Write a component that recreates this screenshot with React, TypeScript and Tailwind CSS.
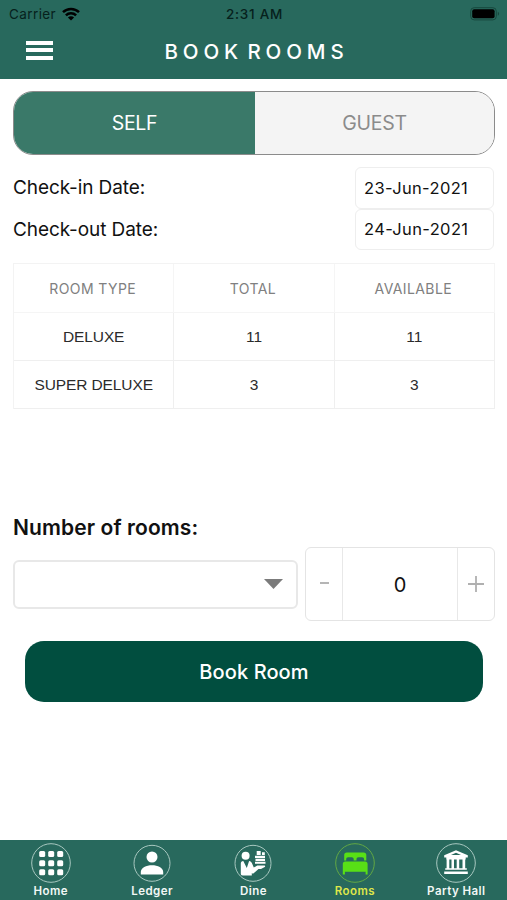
import React from 'react'

const rooms = [
  { type: 'DELUXE', total: 11, available: 11 },
  { type: 'SUPER DELUXE', total: 3, available: 3 },
]

function StatusBar() {
  return (
    <div className="h-7 flex items-center justify-between pl-[9px] pr-[7px] text-[13.5px] text-[#06211c]">
      <div className="flex-1 flex items-center gap-[6px]">
        <span className="w-[47px] tracking-[0.4px]">Carrier</span>
        <svg width="18" height="14" viewBox="0 0 18 14" fill="none" stroke="#000" strokeWidth="2.5">
          <path d="M1 5.2a11.4 11.4 0 0 1 16 0" />
          <path d="M3.9 8.3a7.2 7.2 0 0 1 10.2 0" />
          <path d="M9 13.6L5.9 10.5a4.4 4.4 0 0 1 6.2 0z" fill="#000" stroke="none" />
        </svg>
      </div>
      <span className="font-medium tracking-[0.7px]">2:31 AM</span>
      <div className="flex-1 flex justify-end">
        <svg width="30" height="14" viewBox="0 0 30 14">
          <rect x="0.7" y="0.7" width="25.6" height="12.2" rx="3.5" fill="none" stroke="#17483e" />
          <rect x="2.2" y="2.3" width="22.4" height="9" rx="2" fill="#000" />
          <path d="M27.8 4.8v4a2.2 2.2 0 0 0 0-4z" fill="#17483e" />
        </svg>
      </div>
    </div>
  )
}

function Header() {
  return (
    <header className="h-[79px] bg-[#28695d]">
      <StatusBar />
      <div className="h-[48px] grid grid-cols-[1fr_auto_1fr] items-center">
        <div className="pl-[26px] flex flex-col gap-[3.5px] pb-[4px]">
          <span className="w-[27px] h-1 bg-white"></span>
          <span className="w-[27px] h-1 bg-white"></span>
          <span className="w-[27px] h-1 bg-white"></span>
        </div>
        <h1 className="text-[20.5px] font-medium text-white tracking-[4.9px] [word-spacing:-6px] pl-[6px] whitespace-nowrap">BOOK ROOMS</h1>
      </div>
    </header>
  )
}

function DateRow({ label, value }: { label: string; value: string }) {
  return (
    <div className="h-[41.5px] flex items-center justify-between">
      <span className="text-[19px] pt-px text-[#111] tracking-[-0.1px]">{label}</span>
      <div className="w-[139px] h-full flex items-center pl-2 pt-px border border-[#eeeeee] rounded-md text-[16.5px] tracking-[0.35px] text-[#111]">{value}</div>
    </div>
  )
}

function RoomTable() {
  return (
    <div className="mt-[13px] border-t border-l border-[#f3f3f3]">
      <div className="grid grid-cols-3 h-[49px] text-[14px] tracking-[0.4px] text-[#808080]">
        <div className="flex items-center justify-center pr-[2px] border-r border-b border-[#f5f5f5]">ROOM TYPE</div>
        <div className="flex items-center justify-center pr-[2px] border-r border-b border-[#f5f5f5]">TOTAL</div>
        <div className="flex items-center justify-center pr-[2px] border-r border-b border-[#f5f5f5]">AVAILABLE</div>
      </div>
      {rooms.map((room) => (
        <div key={room.type} className="grid grid-cols-3 h-12 text-[15.5px] text-[#2b2b2b] font-['Liberation_Sans',sans-serif]">
          <div className="flex items-center justify-center pt-px border-r border-b border-[#efefef] tracking-[-0.1px]">{room.type}</div>
          <div className="flex items-center justify-center pt-px border-r border-b border-[#efefef]">{room.total}</div>
          <div className="flex items-center justify-center pt-px border-r border-b border-[#efefef]">{room.available}</div>
        </div>
      ))}
    </div>
  )
}

function HomeIcon() {
  return (
    <svg width="40" height="40" viewBox="0 0 40 40" fill="#fff">
      <circle cx="20" cy="20" r="19.3" fill="none" stroke="#a8c8c0" />
      {[8, 17.2, 26.2].map((y) =>
        [8.2, 17.2, 26.2].map((x) => <rect key={`${x}-${y}`} x={x} y={y} width="6" height="6" rx="1.5" />)
      )}
    </svg>
  )
}

function LedgerIcon() {
  return (
    <svg width="40" height="40" viewBox="0 0 40 40" fill="#fff">
      <circle cx="20" cy="20.3" r="18" fill="none" stroke="#a8c8c0" />
      <circle cx="20" cy="14" r="5.5" />
      <path d="M8.8 31.500v-2.500c0-4.300 5.500-6.800 11.200-6.800s11.200 2.500 11.200 6.800v2.500z" />
    </svg>
  )
}

function DineIcon() {
  return (
    <svg width="40" height="40" viewBox="0 0 40 40" fill="#fff">
      <circle cx="20" cy="20.3" r="18" fill="none" stroke="#a8c8c0" />
      <circle cx="12.6" cy="12.8" r="4" />
      <path d="M7.8 20.500c0-1.500.8-2.500 2.500-2.500l3.500 7 2.300-7c1.600.2 2.600 1.200 3.200 3l1.500 3.500 3.500-2h7.500l.4 1.200-4.200 2.200h-2.500l-4.500 4c-1 .7-1.700.7-2.200 0v2.600H9.800c-1.500 0-2-.7-2-2z" />
      <path d="M22 12.700h10v2.200H22zM22.500 15.700h9.500v2.200h-9.500zM22 18.700h10.500v2H22zM23.700 8h4v4.100h-4zM29 9.300h2.800v2.800H29z" />
    </svg>
  )
}

function RoomsIcon() {
  return (
    <svg width="40" height="40" viewBox="0 0 40 40" fill="#58df16">
      <circle cx="20" cy="20" r="19.3" fill="none" stroke="#62a844" />
      <path d="M9.200 17.500V12c0-1.600 1-2.600 2.600-2.600h16.900c1.600 0 2.600 1 2.600 2.600v5.500h-2.200v-1.300c0-1.300-.7-2-2-2h-3.600c-1.300 0-2 .7-2 2v1.300h-2.800v-1.300c0-1.300-.7-2-2-2h-3.500c-1.300 0-2 .7-2 2v1.300z" />
      <path d="M7.800 31.500V21c0-1.500.9-2.400 2.400-2.400h20c1.500 0 2.400.9 2.400 2.400v10.500h-2v-2.700H9.900v2.700z" />
    </svg>
  )
}

function PartyHallIcon() {
  return (
    <svg width="40" height="40" viewBox="0 0 40 40" fill="#fff">
      <circle cx="20" cy="20" r="19.3" fill="none" stroke="#a8c8c0" />
      <path fillRule="evenodd" d="M20 7.300l11.800 5v2.200H8.200v-2.200zM20 9.700l-5 2.200h10z" />
      <path d="M10.300 14h19.400v2.500H10.300zM10.600 16h2.700v10h-2.700zM15.500 16h2.500v10h-2.500zM20.700 16h2.500v10h-2.500zM26.500 16h2.700v10h-2.700z" />
      <path d="M9.200 25.300h21.600v1.400H9.200zM8.200 28.600h23.600v2.500H8.200z" />
    </svg>
  )
}

const tabs = [
  { label: 'Home', icon: <HomeIcon /> },
  { label: 'Ledger', icon: <LedgerIcon /> },
  { label: 'Dine', icon: <DineIcon /> },
  { label: 'Rooms', icon: <RoomsIcon />, active: true },
  { label: 'Party Hall', icon: <PartyHallIcon /> },
]

function TabBar() {
  return (
    <nav className="h-[60px] grid grid-cols-5 bg-[#28695d]">
      {tabs.map((tab) => (
        <div key={tab.label} className="flex flex-col items-center pt-[3px]">
          {tab.icon}
          <span className={tab.active ? 'text-[11.5px] leading-4 font-semibold tracking-[0.45px] text-[#dfe64a]' : 'text-[11.5px] leading-4 font-semibold tracking-[0.45px] text-[#f2f8f6]'}>
            {tab.label}
          </span>
        </div>
      ))}
    </nav>
  )
}

export default function App() {
  return (
    <div className="w-[507px] h-[900px] flex flex-col bg-white font-['Inter',sans-serif] whitespace-nowrap overflow-hidden">
      <Header />

      <main className="flex-1 pl-[13px] pr-3 pt-3">
        <div className="h-16 flex border border-[#8b8b8b] rounded-[20px] overflow-hidden text-[19.5px] tracking-[-0.3px]">
          <div className="w-[241px] pt-px flex items-center justify-center bg-[#3a7969] text-white">SELF</div>
          <div className="flex-1 pt-px flex items-center justify-center bg-[#f4f4f4] text-[#8b8b8b]">GUEST</div>
        </div>

        <div className="mt-3 pr-px">
          <DateRow label="Check-in Date:" value="23-Jun-2021" />
          <DateRow label="Check-out Date:" value="24-Jun-2021" />
        </div>

        <RoomTable />

        <h2 className="mt-[105px] text-[21px] leading-7 font-semibold text-[#111] tracking-[0.1px]">Number of rooms:</h2>

        <div className="mt-[5px] flex items-center gap-[7px]">
          <div className="w-[285px] h-[49px] flex items-center justify-end pr-[13px] border-2 border-[#e8e8e8] rounded-md">
            <svg width="19" height="10" viewBox="0 0 19 10" fill="#7b7b7b">
              <path d="M0 0h19l-9.500 10z" />
            </svg>
          </div>
          <div className="flex-1 h-[74px] flex border border-[#e4e4e4] rounded-md">
            <div className="w-9 flex items-center justify-center pb-[2px]">
              <span className="w-[9px] h-[2px] bg-[#b5b5b5]"></span>
            </div>
            <div className="flex-1 pt-[2px] flex items-center justify-center border-x border-[#e8e8e8] text-[20px] text-[#111]">0</div>
            <div className="w-9 flex items-center justify-center">
              <svg width="16" height="16" viewBox="0 0 16 16" stroke="#b0b0b0" strokeWidth="1.8">
                <path d="M0 8h16M8 0v16" />
              </svg>
            </div>
          </div>
        </div>

        <button className="mt-[20px] mx-3 w-[458px] h-[61px] block rounded-[19px] bg-[#014e3f] text-white text-[20px] font-medium tracking-[0.1px]">Book Room</button>
      </main>

      <TabBar />
    </div>
  )
}
